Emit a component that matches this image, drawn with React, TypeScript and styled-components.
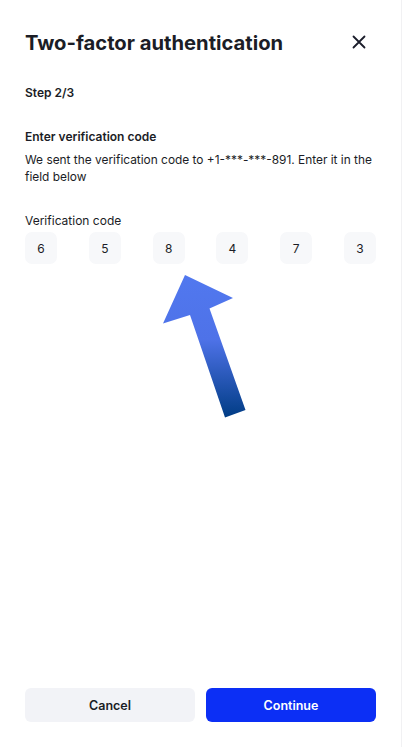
import React from "react";
import styled, { createGlobalStyle } from "styled-components";

const GlobalStyle = createGlobalStyle`
  html, body {
    margin: 0;
    padding: 0;
    background: #fff;
  }
  body {
    font-family: Inter, "Noto Sans", sans-serif;
    color: #1b1d26;
  }
`;

// 整个弹层
const Sheet = styled.div`
  position: relative;
  box-sizing: border-box;
  width: 402px;
  height: 747px;
  border-right: 1px solid #f1f1f3;
  padding: 0 25px 25px 25px;
  display: flex;
  flex-direction: column;
`;

const Header = styled.div`
  display: flex;
  align-items: center;
  justify-content: space-between;
  height: 84px;
  padding-right: 10px;
`;

const Title = styled.h1`
  margin: 0;
  font-size: 20.2px;
  font-weight: 700;
`;

const CloseButton = styled.button`
  border: none;
  background: none;
  padding: 0;
  width: 14px;
  height: 14px;
  display: flex;
  cursor: pointer;
`;

const Step = styled.div`
  font-size: 12px;
  font-weight: 600;
  line-height: 17px;
`;

const Section = styled.div`
  margin-top: 27px;
`;

const SubTitle = styled.div`
  font-size: 12px;
  font-weight: 600;
  line-height: 17px;
`;

const Text = styled.p`
  margin: 6px 0 0;
  font-size: 11.9px;
  line-height: 17px;
`;

const Label = styled.div`
  margin-top: 27px;
  font-size: 12px;
  line-height: 17px;
`;

const CodeRow = styled.div`
  display: flex;
  justify-content: space-between;
  margin-top: 3px;
`;

const Digit = styled.div`
  width: 32px;
  height: 32px;
  border-radius: 7px;
  background: #f7f8fa;
  display: flex;
  align-items: center;
  justify-content: center;
  font-size: 12px;
`;

const Footer = styled.div`
  margin-top: auto;
  display: grid;
  grid-template-columns: 1fr 1fr;
  gap: 11px;
`;

const Button = styled.button<{ primary?: boolean }>`
  height: 34px;
  border: none;
  border-radius: 6px;
  font-family: Inter, "Noto Sans", sans-serif;
  font-size: 12.5px;
  font-weight: 600;
  cursor: pointer;
  background: ${(p) => (p.primary ? "#0c2ff5" : "#f2f3f7")};
  color: ${(p) => (p.primary ? "#fff" : "#1b1d26")};
`;

// 指向验证码的箭头
const Arrow = styled.svg`
  position: absolute;
  left: 0;
  top: 0;
  pointer-events: none;
`;

const code = ["6", "5", "8", "4", "7", "3"];

function App() {
  return (
    <>
      <GlobalStyle />
      <Sheet>
        <Header>
          <Title>Two-factor authentication</Title>
          <CloseButton aria-label="close">
            <svg width="14" height="14" viewBox="0 0 14 14">
              <path
                d="M1.5 1.5 L12.5 12.5 M12.5 1.5 L1.5 12.5"
                stroke="#1b1d2b"
                strokeWidth="1.8"
                strokeLinecap="round"
              />
            </svg>
          </CloseButton>
        </Header>
        <Step>Step 2/3</Step>
        <Section>
          <SubTitle>Enter verification code</SubTitle>
          <Text>
            We sent the verification code to +1-***-***-891. Enter it in the
            field below
          </Text>
        </Section>
        <Label>Verification code</Label>
        <CodeRow>
          {code.map((d, i) => (
            <Digit key={i}>{d}</Digit>
          ))}
        </CodeRow>
        <Footer>
          <Button>Cancel</Button>
          <Button primary>Continue</Button>
        </Footer>
        <Arrow width="403" height="747" viewBox="0 0 403 747">
          <defs>
            <linearGradient id="arrowFill" x1="0" y1="275" x2="0" y2="418" gradientUnits="userSpaceOnUse">
              <stop offset="0" stopColor="#5178ef" />
              <stop offset="0.45" stopColor="#4e72e8" />
              <stop offset="1" stopColor="#003c84" />
            </linearGradient>
          </defs>
          <polygon
            points="185,275 233,298 209.5,308.5 245.5,410 225,417.5 190,315 163,323.5"
            fill="url(#arrowFill)"
          />
        </Arrow>
      </Sheet>
    </>
  );
}

export default App;
